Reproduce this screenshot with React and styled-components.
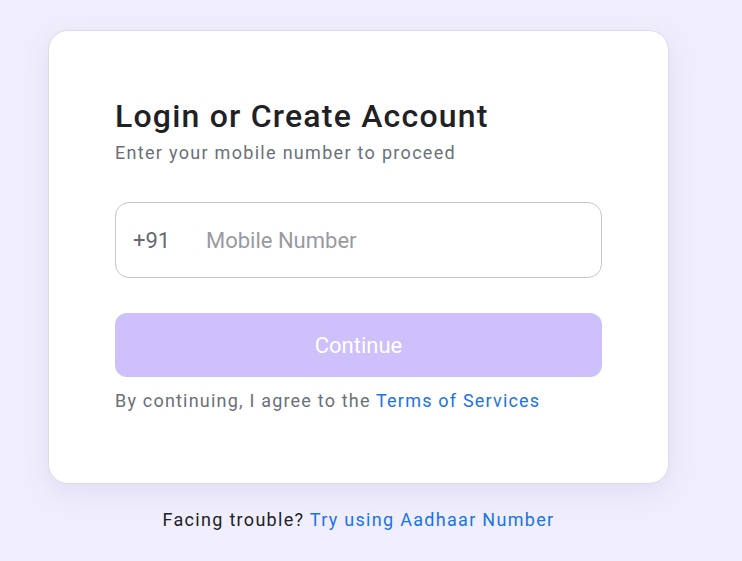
import React from "react";
import styled, { createGlobalStyle } from "styled-components";

const GlobalStyle = createGlobalStyle`
  html, body {
    margin: 0;
    padding: 0;
    background: #f0eefc;
    font-family: Roboto, "Liberation Sans", sans-serif;
  }
`;

const Page = styled.div`
  min-height: 561px;
  padding: 30px 0 0 48px;
  box-sizing: border-box;
`;

const Column = styled.div`
  width: 621px;
  display: flex;
  flex-direction: column;
  align-items: center;
`;

const Card = styled.div`
  width: 100%;
  box-sizing: border-box;
  background: #ffffff;
  border: 1px solid #dddce6;
  border-radius: 20px;
  box-shadow: 0 8px 24px rgba(120, 100, 200, 0.12);
  padding: 65px 66px 70px 66px;
`;

const Title = styled.h1`
  margin: 0;
  font-size: 32px;
  font-weight: 500;
  color: #1f2125;
  letter-spacing: 1.2px;
  line-height: 40px;
`;

const Subtitle = styled.p`
  margin: 5px 0 0 0;
  font-size: 18px;
  color: #6b7078;
  letter-spacing: 1.3px;
  line-height: 24px;
`;

const Field = styled.div`
  margin-top: 37px;
  height: 76px;
  box-sizing: border-box;
  border: 1px solid #c6c6cc;
  border-radius: 14px;
  display: flex;
  align-items: center;
  padding: 0 17px;
`;

const Prefix = styled.span`
  width: 73px;
  font-size: 22px;
  color: #66696f;
`;

const Input = styled.input`
  flex: 1;
  border: none;
  outline: none;
  padding: 0;
  background: transparent;
  font-family: inherit;
  font-size: 22px;
  color: #1f2125;

  &::placeholder {
    color: #999a9f;
  }
`;

const Button = styled.button`
  margin-top: 35px;
  width: 100%;
  height: 64px;
  border: none;
  border-radius: 12px;
  background: #cdc0fb;
  color: #ffffff;
  font-family: inherit;
  font-size: 22px;
`;

const Note = styled.p`
  margin: 12px 0 0 0;
  font-size: 18px;
  color: #6b7078;
  letter-spacing: 1.2px;
  line-height: 24px;
`;

const Link = styled.a`
  color: #1a73e8;
  text-decoration: none;
`;

const Footer = styled.p`
  margin: 24px 0 0 0;
  font-size: 18px;
  color: #202124;
  letter-spacing: 1.3px;
  line-height: 24px;
`;

const App = () => {
  return (
    <Page>
      <GlobalStyle />
      <Column>
        <Card>
          <Title>Login or Create Account</Title>
          <Subtitle>Enter your mobile number to proceed</Subtitle>
          <Field>
            <Prefix>+91</Prefix>
            <Input placeholder="Mobile Number" />
          </Field>
          <Button>Continue</Button>
          <Note>
            By continuing, I agree to the <Link href="#">Terms of Services</Link>
          </Note>
        </Card>
        <Footer>
          Facing trouble? <Link href="#">Try using Aadhaar Number</Link>
        </Footer>
      </Column>
    </Page>
  );
};

export default App;
